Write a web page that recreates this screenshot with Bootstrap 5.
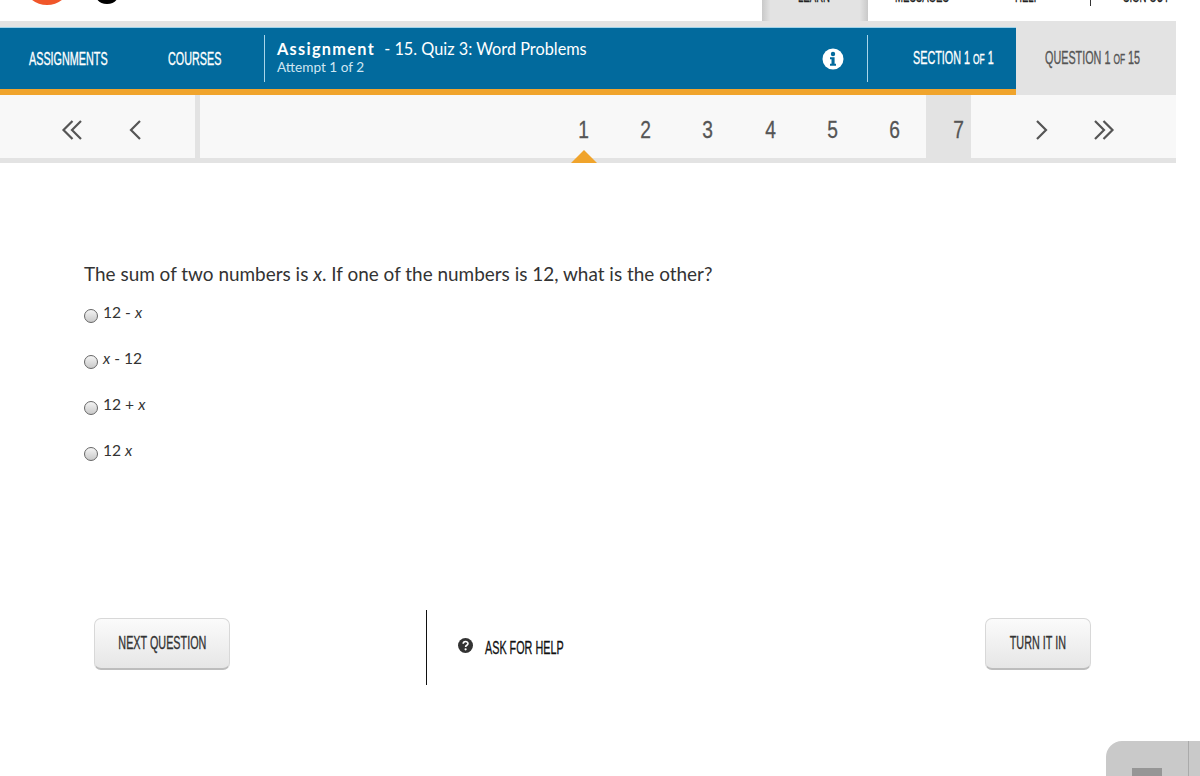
<!DOCTYPE html>
<html lang="en">
<head>
  <meta charset="UTF-8" />
  <meta name="viewport" content="width=device-width, initial-scale=1.0"/>
  <title>Assignment - 15. Quiz 3: Word Problems</title>
  <link href="https://cdn.jsdelivr.net/npm/bootstrap@5.3.3/dist/css/bootstrap.min.css" rel="stylesheet" />
  <style>
    html, body { height: 776px; overflow: hidden; }
    body { font-family: Lato, "Liberation Sans", sans-serif; color: #333; background: #fff; }
    .narrow { display: inline-block; font-family: "Liberation Sans", sans-serif; font-size: 18px; white-space: nowrap; -webkit-text-stroke: .35px currentColor; transform: scaleX(.6); transform-origin: left center; }
    .narrow small { font-size: 14px; }

    .top-strip { height: 21px; width: 1200px; overflow: hidden; }
    .logo-clip { width: 120px; margin-left: 29px; height: 6px; }
    .top-tab { width: 106px; height: 21px; margin-left: 613px; background: linear-gradient(90deg, #c9c9c9, #e3e3e3 8%, #e3e3e3 92%, #c9c9c9); padding-left: 36px; }
    .top-link { height: 13px; margin-top: -10px; color: #222; }
    .top-link .narrow { font-size: 16px; line-height: 13px; vertical-align: top; }
    .top-sep { width: 1px; height: 6px; background: #333; }
    .top-messages { width: 121px; margin-left: 27px; }
    .top-help { width: 75px; }
    .top-out { margin-left: 32px; }

    .page-head { width: 1176px; background: #e3e3e3; padding-top: 6px; }
    .blue-bar { width: 1016px; height: 68px; background: #026a9d; border-top: 1px solid #9fd3ea; border-bottom: 6px solid #f0a42c; color: #fff; }
    .head-link { color: #fff; text-decoration: none; padding-top: 2px; }
    .head-assign { margin-left: 29px; width: 139px; }
    .head-courses { width: 96px; }
    .head-rule { width: 1px; background: #a8d5ea; height: 47px; }
    .head-rule-right { margin-left: 23px; }
    .quiz-title { font-size: 16.3px; line-height: 18px; margin-top: -1px; }
    .quiz-title b { font-weight: 700; letter-spacing: 1.3px; margin-right: 5px; }
    .quiz-attempt { font-size: 13.6px; line-height: 18px; color: #cfe6f2; }
    .section-count { width: 148px; padding-left: 45px; }
    .question-count { width: 160px; color: #555; padding: 0 0 6px 29px; }

    .pager { width: 1176px; height: 68px; background: #f8f8f8; border-bottom: 5px solid #e3e3e3; }
    .pager-left { width: 200px; border-right: 5px solid #e3e3e3; padding-left: 41px; }
    .pager-cell { width: 62.4px; height: 63px; color: #555; position: relative; padding-top: 6px; }
    .pager-cell svg { display: block; }
    .pager-digit { display: inline-block; font-size: 24px; line-height: 24px; transform: scaleX(.8); -webkit-text-stroke: .3px currentColor; font-family: "Liberation Sans", sans-serif; }
    .pager-first { margin-left: 352px; }
    .pager-last { width: 45px; height: 68px; margin-bottom: -5px; background: #e3e3e3; padding: 2px 0 0 26px; }
    .pager-next { margin-left: 39px; }
    .pager-pointer { position: absolute; left: 19px; bottom: -5px; width: 0; height: 0; border-left: 13px solid transparent; border-right: 13px solid transparent; border-bottom: 13px solid #f0a42c; }

    .quiz-body { padding: 99px 0 0 84px; }
    .quiz-question { font-size: 18.95px; line-height: 24px; margin-bottom: 14px; color: #333; }
    .quiz-option { height: 46px; padding-left: 19px; margin: 0; font-size: 15.6px; line-height: 24px; min-height: 0; }
    .quiz-option .form-check-input { width: 14px; height: 14px; margin: 9px 0 0 -19px; background: linear-gradient(#f4f4f4, #c9c9c9); border: 1px solid #666; }

    .quiz-actions { width: 997px; margin: 126px 0 0 94px; height: 75px; }
    .action-btn { width: 136px; height: 52px; margin-top: 8px; background: linear-gradient(#fbfbfb, #e6e6e6); border: 1px solid #d8d8d8; border-bottom: 2px solid #bdbdbd; border-radius: 7px; color: #333; padding: 0 0 1px; }
    .action-btn .narrow { transform-origin: center; }
    .turn-btn { width: 106px; }
    .action-rule { width: 1px; height: 75px; background: #111; margin-left: 196px; }
    .help-link { margin: 28px 0 0 31px; color: #111; text-decoration: none; height: 20px; }
    .help-link svg { margin-right: 12px; }
    .help-link .narrow { margin-top: -3px; }

    .corner-widget { position: fixed; right: 0; bottom: 0; width: 94px; height: 35px; background: #c9c9c9; border-top-left-radius: 16px; }
    .corner-widget i { position: absolute; left: 82px; top: 0; bottom: 0; width: 1px; background: #aaa; }
    .corner-widget u { position: absolute; left: 26px; top: 27px; width: 30px; height: 8px; background: #969696; }
  </style>
</head>
<body>

<div class="top-strip d-flex align-items-start">
  <div class="logo-clip d-flex">
    <svg width="120" height="6" viewBox="0 0 120 6">
      <ellipse cx="18" cy="-12" rx="21" ry="17" fill="#f0562a"/>
      <path d="M69 -3c2 4 6 5 9 5s7-1 9-5" fill="none" stroke="#000" stroke-width="4"/>
    </svg>
  </div>
  <div class="top-tab"><div class="top-link"><span class="narrow">LEARN</span></div></div>
  <div class="top-link top-messages"><span class="narrow">MESSAGES</span></div>
  <div class="top-link top-help"><span class="narrow">HELP</span></div>
  <div class="top-sep"></div>
  <div class="top-link top-out"><span class="narrow">SIGN OUT</span></div>
</div>

<div class="page-head d-flex">
  <div class="blue-bar d-flex align-items-center">
    <div class="head-assign"><a class="head-link narrow" href="#">ASSIGNMENTS</a></div>
    <div class="head-courses"><a class="head-link narrow" href="#">COURSES</a></div>
    <div class="head-rule"></div>
    <div class="ms-2 ps-1 flex-grow-1">
      <div class="quiz-title"><b>Assignment</b> - 15. Quiz 3: Word Problems</div>
      <div class="quiz-attempt">Attempt 1 of 2</div>
    </div>
    <svg width="22" height="22" viewBox="0 0 22 22">
      <circle cx="11" cy="11" r="10.5" fill="#fff"/>
      <circle cx="11" cy="6" r="2.2" fill="#026a9d"/>
      <path d="M8 9.3h4.600v6.400H14v2H8v-2h1.500v-4.400H8z" fill="#026a9d"/>
    </svg>
    <div class="head-rule head-rule-right"></div>
    <div class="section-count"><span class="narrow">SECTION 1 <small>OF</small> 1</span></div>
  </div>
  <div class="question-count d-flex align-items-center">
    <span class="narrow">QUESTION 1 <small>OF</small> 15</span>
  </div>
</div>

<div class="pager d-flex">
  <div class="pager-left d-flex">
    <div class="pager-cell d-flex align-items-center justify-content-center">
      <svg width="22" height="20" viewBox="0 0 22 20" fill="none" stroke="#555" stroke-width="2.2"><path d="M11.500 1 2.500 10l9 9M20 1l-9 9 9 9"/></svg>
    </div>
    <div class="pager-cell d-flex align-items-center justify-content-center">
      <svg width="14" height="20" viewBox="0 0 14 20" fill="none" stroke="#555" stroke-width="2.2"><path d="M12 1 3 10l9 9"/></svg>
    </div>
  </div>
  <div class="pager-cell pager-first d-flex align-items-center justify-content-center"><span class="pager-digit">1</span><span class="pager-pointer"></span></div>
  <div class="pager-cell d-flex align-items-center justify-content-center"><span class="pager-digit">2</span></div>
  <div class="pager-cell d-flex align-items-center justify-content-center"><span class="pager-digit">3</span></div>
  <div class="pager-cell d-flex align-items-center justify-content-center"><span class="pager-digit">4</span></div>
  <div class="pager-cell d-flex align-items-center justify-content-center"><span class="pager-digit">5</span></div>
  <div class="pager-cell d-flex align-items-center justify-content-center"><span class="pager-digit">6</span></div>
  <div class="pager-cell pager-last d-flex align-items-center"><span class="pager-digit">7</span></div>
  <div class="pager-cell pager-next d-flex align-items-center justify-content-center">
    <svg width="14" height="20" viewBox="0 0 14 20" fill="none" stroke="#555" stroke-width="2.2"><path d="m2 1 9 9-9 9"/></svg>
  </div>
  <div class="pager-cell d-flex align-items-center justify-content-center">
    <svg width="22" height="20" viewBox="0 0 22 20" fill="none" stroke="#555" stroke-width="2.2"><path d="m2 1 9 9-9 9M10.500 1l9 9-9 9"/></svg>
  </div>
</div>

<div class="quiz-body">
  <p class="quiz-question">The sum of two numbers is <em>x</em>. If one of the numbers is 12, what is the other?</p>
  <div class="form-check quiz-option"><input class="form-check-input" type="radio" name="answer" id="a1"><label class="form-check-label" for="a1">12 - <em>x</em></label></div>
  <div class="form-check quiz-option"><input class="form-check-input" type="radio" name="answer" id="a2"><label class="form-check-label" for="a2"><em>x</em> - 12</label></div>
  <div class="form-check quiz-option"><input class="form-check-input" type="radio" name="answer" id="a3"><label class="form-check-label" for="a3">12 + <em>x</em></label></div>
  <div class="form-check quiz-option"><input class="form-check-input" type="radio" name="answer" id="a4"><label class="form-check-label" for="a4">12 <em>x</em></label></div>
</div>

<div class="quiz-actions d-flex align-items-start">
  <button type="button" class="btn action-btn d-flex align-items-center justify-content-center"><span class="narrow">NEXT QUESTION</span></button>
  <div class="action-rule"></div>
  <a class="help-link d-flex align-items-start" href="#">
    <svg width="15" height="15" viewBox="0 0 15 15">
      <circle cx="7.500" cy="7.500" r="7.500" fill="#333"/>
      <path d="M5.200 5.800c0-3 4.800-3 4.800-.2 0 1.700-2.400 1.600-2.400 3.300" fill="none" stroke="#fff" stroke-width="1.600"/>
      <circle cx="7.600" cy="11.300" r="1.100" fill="#fff"/>
    </svg>
    <span class="narrow">ASK FOR HELP</span>
  </a>
  <button type="button" class="btn action-btn turn-btn d-flex align-items-center justify-content-center ms-auto"><span class="narrow">TURN IT IN</span></button>
</div>

<div class="corner-widget"><i></i><u></u></div>

<script src="https://cdn.jsdelivr.net/npm/bootstrap@5.3.3/dist/js/bootstrap.bundle.min.js"></script>
</body>
</html>
